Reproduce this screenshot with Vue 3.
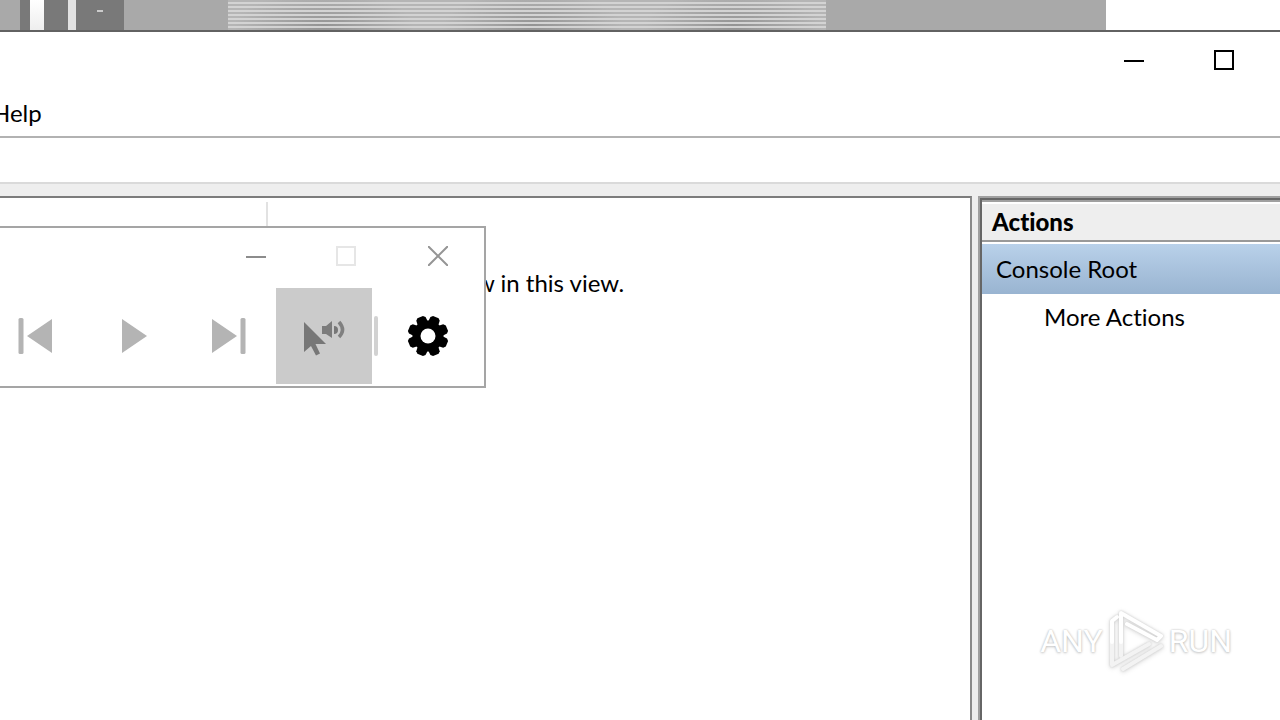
<script setup>
const actions = ['More Actions']
const gearTeeth = [22.5, 67.5, 112.5, 157.5, 202.5, 247.5, 292.5, 337.5]
</script>

<template>
  <div class="screen">
    <div class="backdrop" aria-hidden="true">
      <span class="block mid edge"></span>
      <span class="block dark narrow"></span>
      <span class="block white"></span>
      <span class="block dark column"></span>
      <span class="block pale"></span>
      <span class="block dark badge"><i></i></span>
      <span class="block mid spacer"></span>
      <span class="block stripes"></span>
      <span class="block mid rest"></span>
    </div>

    <div class="window">
      <header class="titlebar">
        <button class="caption" aria-label="Minimize">
          <svg width="20" height="20" viewBox="0 0 20 20"><path d="M0 11H20" stroke="#000" stroke-width="2" /></svg>
        </button>
        <button class="caption" aria-label="Maximize">
          <svg width="20" height="20" viewBox="0 0 20 20"><path d="M1 1H19V19H1Z" fill="none" stroke="#000" stroke-width="2" /></svg>
        </button>
      </header>
      <nav class="menubar"><button class="menu">Help</button></nav>
      <div class="toolbar"></div>

      <main class="panes">
        <section class="results">
          <div class="columns"><span></span></div>
          <p class="empty">w in this view.</p>
        </section>
        <aside class="actions">
          <h2>Actions</h2>
          <button class="group">Console Root</button>
          <button v-for="item in actions" :key="item" class="action">{{ item }}</button>
        </aside>
      </main>
    </div>

    <div class="player" role="dialog" aria-label="Audio">
      <div class="player-title">
        <button class="player-caption minimize" aria-label="Minimize">
          <svg width="20" height="20" viewBox="0 0 20 20"><path d="M0 11H20" stroke="#8c8c8c" stroke-width="2" /></svg>
        </button>
        <button class="player-caption" aria-label="Maximize" disabled>
          <svg width="20" height="20" viewBox="0 0 20 20"><path d="M1 1H19V19H1Z" fill="none" stroke="#e6e6e6" stroke-width="2" /></svg>
        </button>
        <button class="player-caption" aria-label="Close">
          <svg class="clip" width="20" height="20" viewBox="0 0 20 20"><path d="M0 0L20 20M20 0L0 20" stroke="#959595" stroke-width="2" /></svg>
        </button>
      </div>
      <div class="controls">
        <button class="control" aria-label="Previous">
          <svg width="36" height="40" viewBox="0 0 36 40" fill="#b4b4b4"><rect x="1.500" y="2" width="5" height="36" rx="1.500" /><path d="M10 20L35 3V37Z" /></svg>
        </button>
        <button class="control" aria-label="Play">
          <svg width="36" height="40" viewBox="0 0 36 40" fill="#b4b4b4"><path d="M8 3L33 20L8 37Z" /></svg>
        </button>
        <button class="control" aria-label="Next">
          <svg width="36" height="40" viewBox="0 0 36 40" fill="#b4b4b4"><path d="M2 3L27 20L2 37Z" /><rect x="30.500" y="2" width="5" height="36" rx="1.500" /></svg>
        </button>
        <button class="control active" aria-label="Read aloud">
          <svg width="44" height="40" viewBox="0 0 44 40">
            <path d="M2 6V36L9 30L14 39.500L18 37.500L13.500 28H24Z" fill="#777" />
            <path d="M20 10H24L30 5V22L24 18H20Z" fill="#7c7c7c" />
            <path d="M32 10Q36 10 36 14Q36 18 32 18Z" fill="#777" />
            <path d="M37 6Q44 14 37 21" fill="none" stroke="#808080" stroke-width="3.500" />
          </svg>
        </button>
        <span class="divider"></span>
        <button class="control settings" aria-label="Settings">
          <svg width="40" height="40" viewBox="-20 -20 40 40">
            <circle r="15.500" />
            <path v-for="angle in gearTeeth" :key="angle" d="M-5.500 -13L-5 -18.500L-3 -20.500H3L5 -18.500L5.500 -13Z" :transform="`rotate(${angle})`" />
            <circle r="7.500" fill="#fff" />
          </svg>
        </button>
      </div>
    </div>

    <div class="watermark">
      <span>ANY</span>
      <svg width="58" height="66" viewBox="0 0 58 66" fill="none" stroke-width="4" stroke-linejoin="round" stroke-linecap="round">
        <g stroke="#f3f3f3">
          <path d="M5 34V57L42 36" />
          <path d="M16 61L54 38" />
          <path d="M14 48V34" />
        </g>
        <g stroke="#fff">
          <path d="M10 9L5 13V34" />
          <path d="M14 34V5L54 28L50 32L20 16" />
        </g>
      </svg>
      <span>RUN</span>
    </div>
  </div>
</template>

<style>
body { margin: 0; background: #fff; }
</style>

<style scoped>
* { box-sizing: border-box; }
.screen {
  position: relative;
  display: flex;
  flex-direction: column;
  min-height: 100vh;
  overflow: hidden;
  color: #000;
  font: 24px/32px Lato, "Open Sans", sans-serif;
  font-variant-ligatures: none;
}
button {
  padding: 0;
  border: 0;
  background: none;
  color: inherit;
  font: inherit;
  font-variant-ligatures: none;
}
svg { display: block; flex: none; overflow: visible; }
.clip { overflow: hidden; }
.backdrop { display: flex; height: 30px; margin-right: 174px; }
.block { flex: none; }
.mid { background: #a9a9a9; }
.dark { background: #797979; }
.edge { width: 20px; }
.narrow { width: 10px; }
.white { width: 14px; background: linear-gradient(#fff, #eee); }
.column { width: 24px; }
.pale { width: 8px; background: #e2e2e2; }
.badge { width: 48px; padding: 10px 0 0 21px; }
.badge i { display: block; width: 6px; height: 2px; background: #ccc; }
.spacer { width: 104px; }
.stripes {
  width: 598px;
  background:
    repeating-linear-gradient(#0000 0 2px, #d3d3d3 2px 4px),
    radial-gradient(ellipse 90px 34px at 96px 26px, #939393, #b5b5b500),
    radial-gradient(ellipse 90px 34px at 304px 26px, #939393, #b5b5b500),
    radial-gradient(ellipse 90px 34px at 506px 26px, #939393, #b5b5b500),
    #b5b5b5;
}
.rest { flex: 1; }
.window {
  display: flex;
  flex: 1;
  flex-direction: column;
  border-top: 2px solid #626262;
}
.titlebar {
  display: flex;
  justify-content: flex-end;
  height: 60px;
  padding-right: 10px;
}
.caption { display: grid; place-items: center; width: 90px; height: 56px; }
.caption + .caption { margin-right: 1px; }
.menubar { display: flex; height: 46px; border-bottom: 2px solid #b2b2b2; }
.menu { height: 42px; margin-left: -8px; }
.toolbar { height: 46px; border-bottom: 2px solid #dadada; }
.panes {
  display: flex;
  flex: 1;
  gap: 6px;
  padding-top: 12px;
  background: #eee;
}
.results {
  flex: 1;
  border-top: 2px solid #7c7c7c;
  border-right: 2px solid #8a8a8a;
  background: #fff;
}
.columns { height: 30px; padding-top: 4px; }
.columns span { display: block; width: 268px; height: 26px; border-right: 2px solid #e2e2e2; }
.empty { margin: 39px 0 0 476px; }
.actions {
  display: flex;
  flex-direction: column;
  width: 302px;
  padding: 4px 0 0 2px;
  border-top: 2px solid #a0a0a0;
  border-left: 2px solid #a0a0a0;
  background: #fff;
  box-shadow: inset 2px 2px #666, inset 0 4px #a0a0a0;
}
.actions h2 {
  height: 40px;
  margin: 0 0 2px;
  padding-left: 10px;
  border-top: 2px solid #fff;
  border-bottom: 2px solid #999;
  background: #eee;
  font-size: 24px;
  font-weight: 900;
  line-height: 36px;
}
.group {
  height: 50px;
  padding-left: 14px;
  background: linear-gradient(#b9d1ea, #99b4d1);
  text-align: left;
}
.action { height: 46px; padding-left: 62px; text-align: left; }
.player {
  position: absolute;
  top: 226px;
  left: 0;
  width: 486px;
  border: 2px solid #a5a5a5;
  border-left: 0;
  background: #fff;
}
.player-title { display: flex; justify-content: flex-end; height: 60px; }
.player-caption { display: grid; place-items: center; width: 92px; height: 56px; }
.minimize { width: 88px; }
.controls { display: flex; align-items: center; height: 98px; padding-bottom: 2px; }
.control { display: grid; place-items: center; width: 96px; height: 96px; }
.control:first-child { width: 84px; padding-right: 14px; }
.active { background: #cbcbcb; }
.divider { width: 4px; height: 40px; margin-left: 2px; border-radius: 2px; background: #d2d2d2; }
.settings { width: 100px; }
.watermark {
  position: absolute;
  right: 48px;
  bottom: 46px;
  display: flex;
  align-items: center;
  gap: 4px;
  color: #fff;
  font: 32px/64px Roboto, sans-serif;
  text-shadow: 0 0 2px #bbb, 0 1px 3px #ccc;
}
.watermark svg { filter: drop-shadow(0 0 1px #ccc) drop-shadow(0 1px 2px #ddd); }
</style>
